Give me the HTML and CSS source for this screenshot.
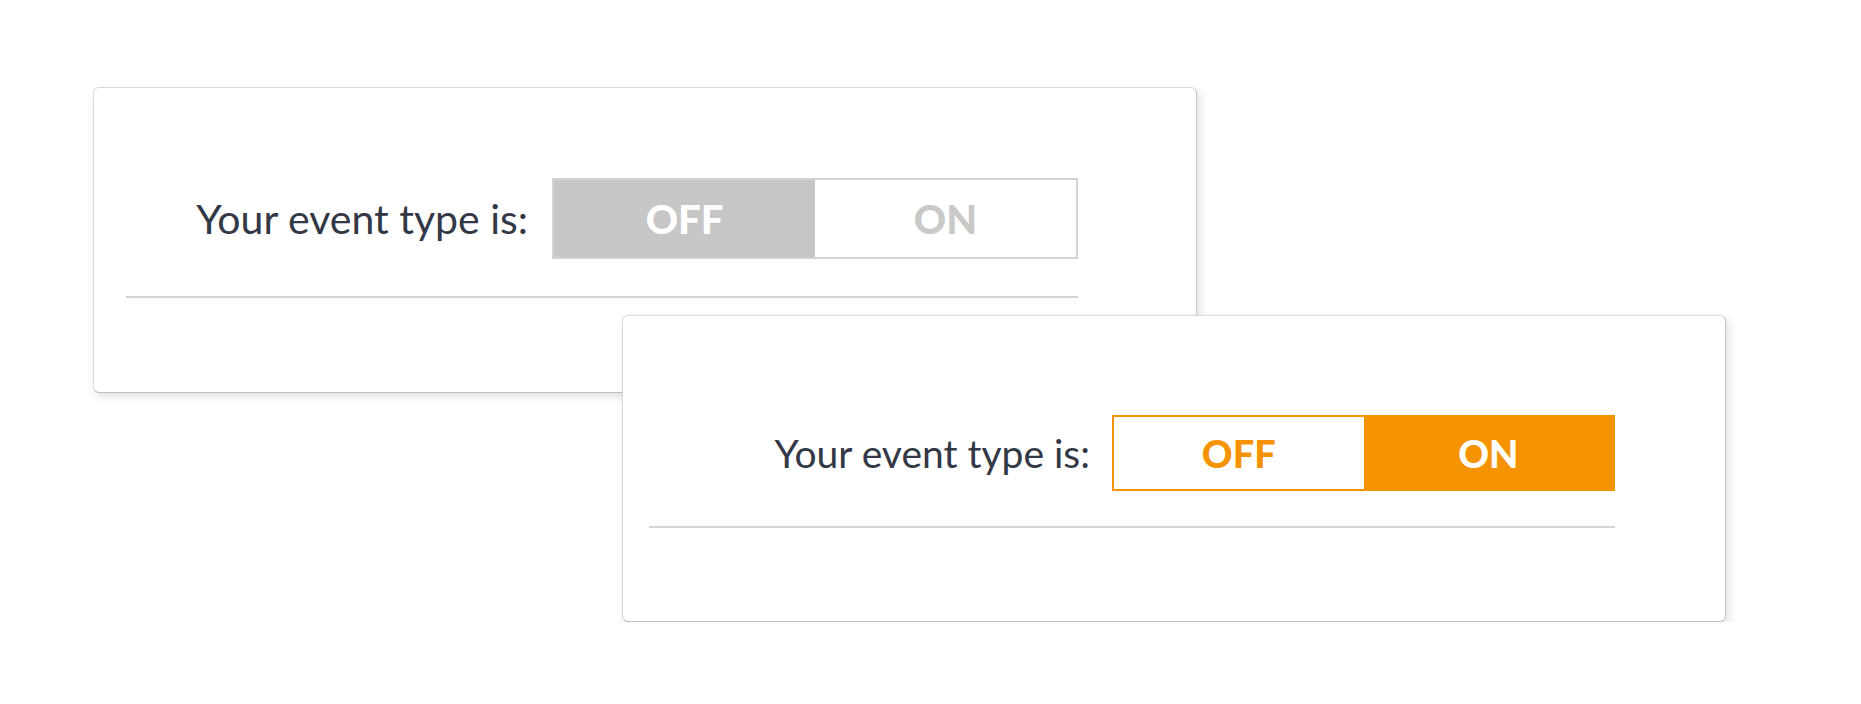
FILE: index.html
```html
<!DOCTYPE html>
<html>
<head>
<meta charset="utf-8">
<link rel="stylesheet" href="styles.css">
</head>
<body>
<div class="stage">
  <div class="card card-off">
    <div class="row">
      <span class="label">Your event type is:</span>
      <div class="toggle">
        <span class="opt active">OFF</span>
        <span class="opt">ON</span>
      </div>
    </div>
    <div class="rule"></div>
  </div>
  <div class="card card-on">
    <div class="row">
      <span class="label">Your event type is:</span>
      <div class="toggle">
        <span class="opt">OFF</span>
        <span class="opt active">ON</span>
      </div>
    </div>
    <div class="rule"></div>
  </div>
</div>
</body>
</html>
```

FILE: styles.css
```css
html, body {
  margin: 0;
  padding: 0;
  background: #ffffff;
}

.stage {
  padding: 87px 0 0 93px;
  font-family: Lato, "Liberation Sans", sans-serif;
}

.card {
  position: relative;
  box-sizing: border-box;
  width: 1104px;
  height: 306px;
  background: #ffffff;
  border: 1px solid #dadada;
  border-right-color: #c4c4c4;
  border-bottom-color: #bdbdbd;
  border-radius: 6px;
  box-shadow: 3px 4px 10px rgba(0, 0, 0, 0.12);
}

.row {
  display: flex;
  align-items: center;
  justify-content: flex-end;
}

.label {
  color: #323845;
  white-space: nowrap;
}

.toggle {
  display: flex;
  box-sizing: border-box;
}

.opt {
  flex: 1;
  display: flex;
  align-items: center;
  justify-content: center;
  font-weight: 900;
}

.rule {
  height: 2px;
  background: #d4d4d4;
}

/* card 1: OFF state */
.card-off .row {
  padding: 90px 118px 0 0;
}
.card-off .label {
  font-size: 41px;
  margin-right: 24px;
}
.card-off .toggle {
  width: 526px;
  height: 81px;
  border: 2px solid #d3d3d3;
}
.card-off .opt {
  font-size: 40px;
  color: #c9c9c9;
}
.card-off .opt.active {
  background: #c6c6c6;
  color: #ffffff;
}
.card-off .rule {
  margin: 37px 118px 0 32px;
}

/* card 2: ON state */
.card-on {
  margin: -78px 0 0 529px;
  height: 307px;
}
.card-on .row {
  padding: 99px 110px 0 0;
}
.card-on .label {
  font-size: 39px;
  margin-right: 22px;
}
.card-on .toggle {
  width: 503px;
  height: 76px;
  border: 2px solid #f59300;
}
.card-on .opt {
  font-size: 38px;
  color: #f59300;
}
.card-on .opt.active {
  background: #f59300;
  color: #ffffff;
}
.card-on .rule {
  margin: 35px 110px 0 26px;
}
```
